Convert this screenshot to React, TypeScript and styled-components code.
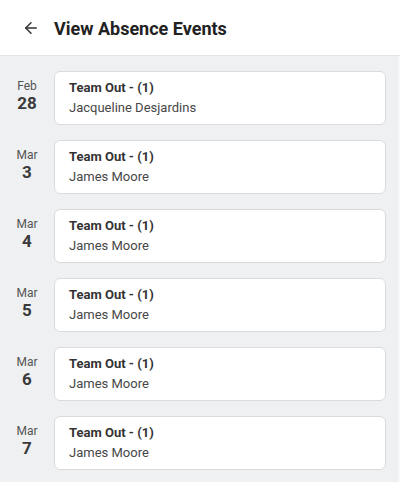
import styled, { createGlobalStyle } from 'styled-components';
import { ArrowLeft } from 'lucide-react';

interface AbsenceEvent {
  month: string;
  day: number;
  title: string;
  person: string;
}

const events: AbsenceEvent[] = [
  { month: 'Feb', day: 28, title: 'Team Out - (1)', person: 'Jacqueline Desjardins' },
  { month: 'Mar', day: 3, title: 'Team Out - (1)', person: 'James Moore' },
  { month: 'Mar', day: 4, title: 'Team Out - (1)', person: 'James Moore' },
  { month: 'Mar', day: 5, title: 'Team Out - (1)', person: 'James Moore' },
  { month: 'Mar', day: 6, title: 'Team Out - (1)', person: 'James Moore' },
  { month: 'Mar', day: 7, title: 'Team Out - (1)', person: 'James Moore' },
];

const GlobalStyle = createGlobalStyle`
  body {
    margin: 0;
    font-family: Roboto, "Liberation Sans", sans-serif;
    background: #ffffff;
  }
`;

const Page = styled.div`
  width: 400px;
  height: 482px;
  display: flex;
  flex-direction: column;
  overflow: hidden;
`;

const Header = styled.header`
  display: flex;
  align-items: center;
  gap: 14px;
  height: 57px;
  padding: 1px 0 0 22px;
  box-sizing: border-box;
  background: #ffffff;
  border-bottom: 1px solid #e2e4e7;
`;

const BackButton = styled.button`
  display: flex;
  align-items: center;
  justify-content: center;
  padding: 0;
  border: none;
  background: none;
  color: #333333;
  cursor: pointer;
`;

const Title = styled.h1`
  margin: 0;
  font-size: 18px;
  font-weight: 700;
  color: #222222;
`;

const EventList = styled.div`
  flex: 1;
  display: flex;
  flex-direction: column;
  gap: 15px;
  padding: 15px 12px 12px 0;
  background: #eef0f2;
  border-right: 2px solid #f6f7f8;
`;

const EventRow = styled.div`
  display: flex;
  align-items: flex-start;
`;

const DateColumn = styled.div`
  width: 54px;
  flex-shrink: 0;
  display: flex;
  flex-direction: column;
  align-items: center;
  padding-top: 8px;
`;

const Month = styled.span`
  font-size: 12px;
  line-height: 14px;
  color: #555555;
`;

const Day = styled.span`
  font-size: 17px;
  line-height: 21px;
  font-weight: 700;
  color: #3a3a3a;
`;

const EventCard = styled.div`
  flex: 1;
  display: flex;
  flex-direction: column;
  padding: 6px 14px;
  background: #ffffff;
  border: 1px solid #d9dbdf;
  border-radius: 6px;
`;

const EventTitle = styled.span`
  font-size: 13px;
  line-height: 20px;
  font-weight: 700;
  color: #333333;
`;

const EventPerson = styled.span`
  font-size: 13px;
  line-height: 20px;
  color: #474747;
`;

export default function App() {
  return (
    <Page>
      <GlobalStyle />
      <Header>
        <BackButton aria-label="Back">
          <ArrowLeft size={18} strokeWidth={2} />
        </BackButton>
        <Title>View Absence Events</Title>
      </Header>
      <EventList>
        {events.map((event) => (
          <EventRow key={`${event.month}-${event.day}`}>
            <DateColumn>
              <Month>{event.month}</Month>
              <Day>{event.day}</Day>
            </DateColumn>
            <EventCard>
              <EventTitle>{event.title}</EventTitle>
              <EventPerson>{event.person}</EventPerson>
            </EventCard>
          </EventRow>
        ))}
      </EventList>
    </Page>
  );
}
